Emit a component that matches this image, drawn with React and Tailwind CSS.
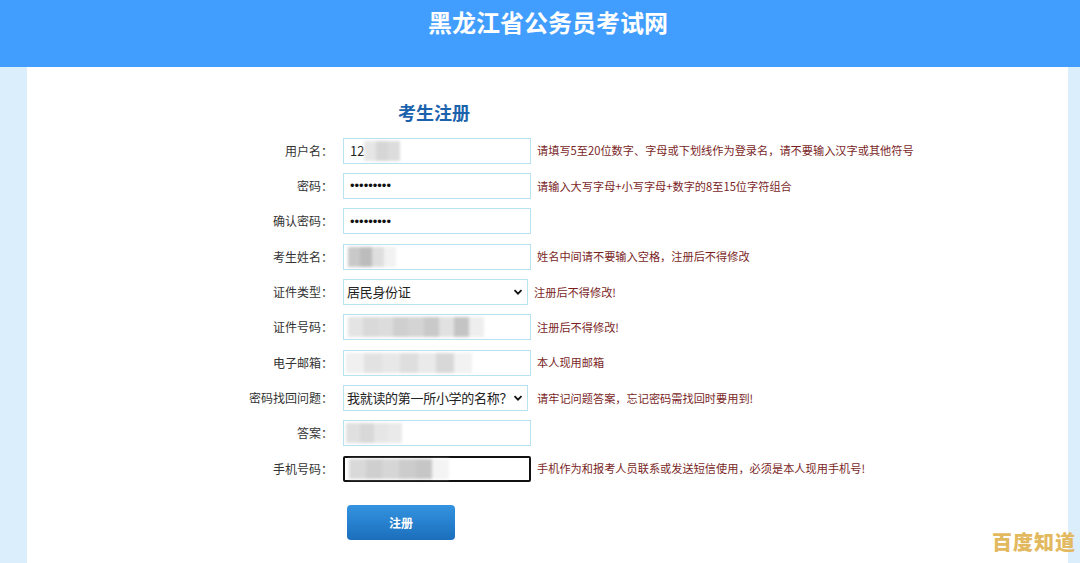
import React from "react";

const Blur = ({ w, shades }) => (
  <div className="flex h-[20px] items-center blur-[1.5px]" style={{ width: w }}>
    {shades.map((c, i) => (
      <div key={i} className="h-full flex-1" style={{ background: c }} />
    ))}
  </div>
);

const Chevron = () => (
  <svg width="12" height="12" viewBox="0 0 12 12" className="shrink-0">
    <path d="M2.5 4.2 6 7.7 9.5 4.2" fill="none" stroke="#111" strokeWidth="1.8" />
  </svg>
);

const Dots = () => (
  <span className="pl-[6px] font-['Liberation_Sans'] text-[13px] text-[#111]">•••••••••</span>
);

const rows = [
  {
    label: "用户名：",
    field: (
      <div className="flex items-center gap-0 pl-[6px]">
        <span className="text-[13px] text-[#222]">12</span>
        <Blur w={36} shades={["#e6e6e6", "#d6d6d6", "#dcdcdc"]} />
      </div>
    ),
    hint: "请填写5至20位数字、字母或下划线作为登录名，请不要输入汉字或其他符号",
  },
  {
    label: "密码：",
    field: <Dots />,
    hint: "请输入大写字母+小写字母+数字的8至15位字符组合",
  },
  {
    label: "确认密码：",
    field: <Dots />,
  },
  {
    label: "考生姓名：",
    field: (
      <div className="pl-[4px]">
        <Blur w={48} shades={["#c9c9c9", "#bcbcbc", "#dedede", "#f2f2f2"]} />
      </div>
    ),
    hint: "姓名中间请不要输入空格，注册后不得修改",
  },
  {
    label: "证件类型：",
    select: "居民身份证",
    hint: "注册后不得修改!",
  },
  {
    label: "证件号码：",
    field: (
      <div className="pl-[4px]">
        <Blur
          w={136}
          shades={["#e4e4e4", "#d9d9d9", "#dcdcdc", "#cfcfcf", "#d4d4d4", "#c9c9c9", "#e1e1e1", "#c4c4c4", "#eeeeee"]}
        />
      </div>
    ),
    hint: "注册后不得修改!",
  },
  {
    label: "电子邮箱：",
    field: (
      <div className="pl-[2px]">
        <Blur w={126} shades={["#f0f0f0", "#e2e2e2", "#e8e8e8", "#dedede", "#eaeaea", "#d8d8d8", "#f2f2f2"]} />
      </div>
    ),
    hint: "本人现用邮箱",
  },
  {
    label: "密码找回问题：",
    select: "我就读的第一所小学的名称？",
    hint: "请牢记问题答案，忘记密码需找回时要用到!",
    hintPad: "pl-[9px]",
  },
  {
    label: "答案：",
    field: (
      <div className="pl-[2px]">
        <Blur w={56} shades={["#e0e0e0", "#d8d8d8", "#e6e6e6", "#eaeaea"]} />
      </div>
    ),
  },
  {
    label: "手机号码：",
    dark: true,
    field: (
      <div className="pl-[4px]">
        <Blur w={100} shades={["#d9d9d9", "#cfcfcf", "#d6d6d6", "#cccccc", "#c6c6c6", "#f4f4f4"]} />
      </div>
    ),
    hint: "手机作为和报考人员联系或发送短信使用，必须是本人现用手机号!",
  },
];

export default function App() {
  return (
    <div
      className="flex h-[563px] w-[1080px] flex-col overflow-hidden bg-[#dbeefb]"
      style={{ fontFamily: '"Noto Sans CJK SC", "Noto Sans", sans-serif' }}
    >
      <header className="flex h-[67px] shrink-0 justify-center bg-[#429efe] pl-[16px] pt-[4px]">
        <h1 className="text-[24px] font-bold leading-[36px] text-white">黑龙江省公务员考试网</h1>
      </header>

      <main className="relative ml-[27px] mr-[12px] flex-1 bg-white">
        <h2 className="ml-[371px] mt-[32px] text-[18px] font-bold leading-[26px] text-[#1b62ad]">考生注册</h2>

        <div className="mt-[8px] flex flex-col">
          {rows.map((r) => (
            <div key={r.label} className="flex h-[35.35px] items-center">
              <div className="w-[306px] shrink-0 text-right text-[12px] text-[#333]">{r.label}</div>
              <div className="ml-[10px] shrink-0">
                {r.select ? (
                  <div className="flex h-[26px] w-[185px] items-center justify-between border border-[#b8e2f2] pl-[3px] pr-[3px] text-[13px] text-[#222]">
                    <span className="whitespace-nowrap tracking-[-0.3px]">{r.select}</span>
                    <Chevron />
                  </div>
                ) : (
                  <div
                    className={
                      r.dark
                        ? "flex h-[26px] w-[188px] items-center rounded-[2px] border-2 border-[#111]"
                        : "flex h-[26px] w-[188px] items-center border border-[#b8e2f2]"
                    }
                  >
                    {r.field}
                  </div>
                )}
              </div>
              {r.hint && (
                <div className={`${r.hintPad || "pl-[6px]"} text-[11.2px] text-[#7a1f1f]`}>{r.hint}</div>
              )}
            </div>
          ))}
        </div>

        <div className="ml-[320px] mt-[19px]">
          <button className="h-[35px] w-[108px] rounded-[4px] bg-gradient-to-b from-[#3493e0] to-[#1b6fbc] text-[12px] font-bold text-white">
            注册
          </button>
        </div>

        <div className="absolute bottom-[6px] right-[-8px] text-[20px] font-black tracking-[1px] text-[#e3b960]">百度知道</div>
      </main>
    </div>
  );
}
